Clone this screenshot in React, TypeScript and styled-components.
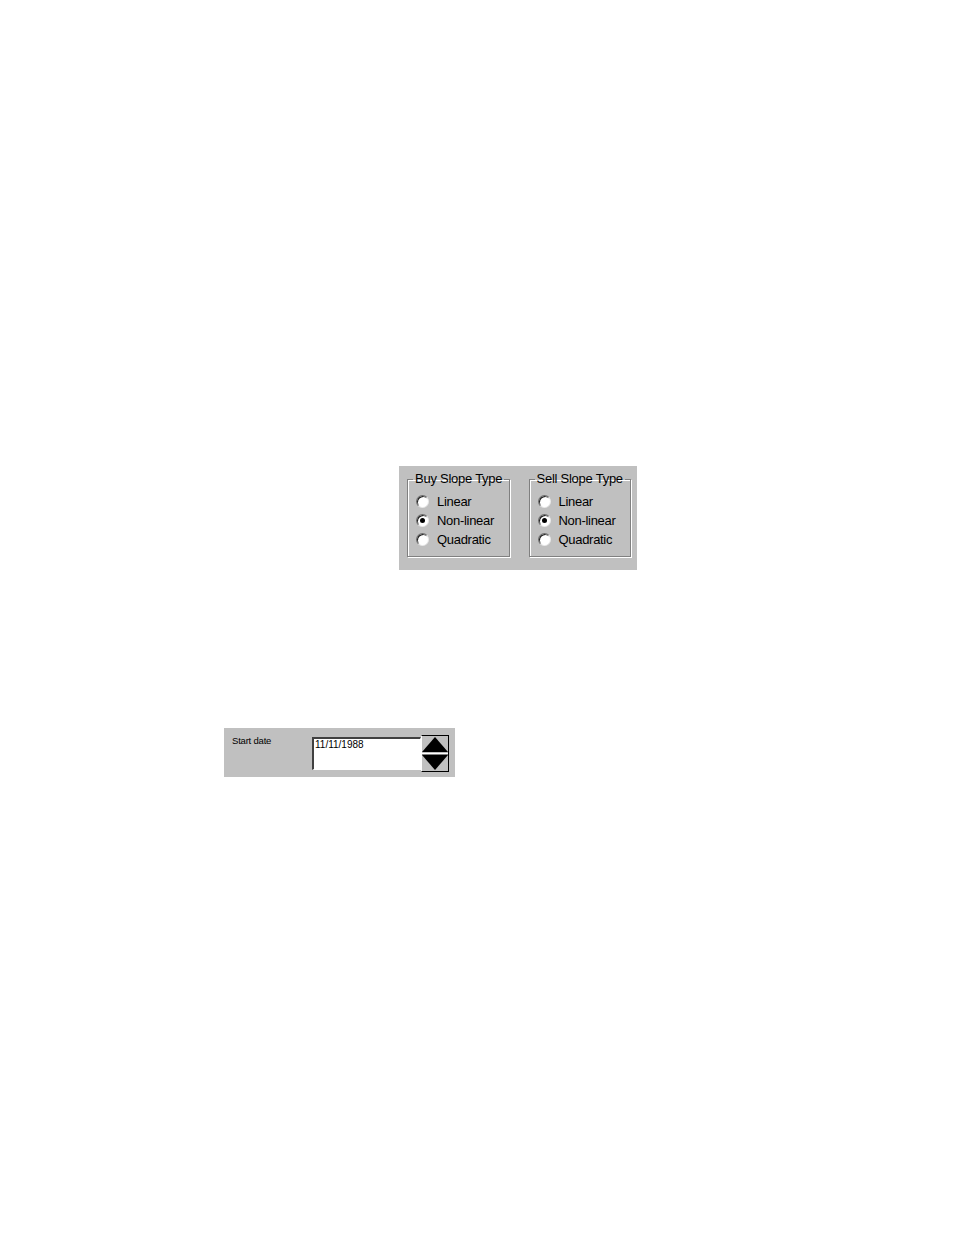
import React from 'react';
import styled, { createGlobalStyle } from 'styled-components';

const GlobalStyle = createGlobalStyle`
  html, body {
    margin: 0;
    padding: 0;
    background: #ffffff;
  }
  body {
    font-family: "Liberation Sans", Arial, sans-serif;
  }
`;

const Page = styled.div`
  width: 954px;
  min-height: 1235px;
  display: flex;
  flex-direction: column;
  align-items: flex-start;
  padding-top: 466px;
  box-sizing: border-box;
`;

const Dialog = styled.div<{ $left: number; $top?: number }>`
  margin-left: ${(p) => p.$left}px;
  margin-top: ${(p) => p.$top ?? 0}px;
  background: #c0c0c0;
  box-sizing: border-box;
`;

const SlopePanel = styled(Dialog)`
  width: 238px;
  height: 104px;
  display: flex;
  gap: 19px;
  padding: 5px 6px 0 8px;
`;

const Group = styled.fieldset`
  margin: 0;
  min-inline-size: 0;
  width: 103px;
  height: 86px;
  box-sizing: border-box;
  padding: 5px 0 0 8px;
  border: 1px solid #808080;
  box-shadow: 1px 1px 0 #ffffff, inset 1px 1px 0 #ffffff;
`;

const Legend = styled.legend`
  margin-left: -3px;
  padding: 0 2px;
  white-space: nowrap;
  font-size: 13px;
  letter-spacing: -0.25px;
  line-height: 16px;
  color: #000;
`;

const Option = styled.label`
  display: flex;
  align-items: center;
  height: 19px;
  gap: 8px;
  white-space: nowrap;
  font-size: 13px;
  letter-spacing: -0.3px;
  color: #000;
`;

const RadioDot = styled.span<{ $checked?: boolean }>`
  position: relative;
  width: 13px;
  height: 13px;
  border-radius: 50%;
  box-sizing: border-box;
  background: #ffffff;
  border: 1px solid;
  border-color: #6a6a6a #e8e8e8 #e8e8e8 #6a6a6a;
  box-shadow: inset 1px 1px 0 #202020;
  flex: none;

  &::after {
    content: '';
    display: ${(p) => (p.$checked ? 'block' : 'none')};
    position: absolute;
    left: 3px;
    top: 3px;
    width: 5px;
    height: 5px;
    border-radius: 50%;
    background: #000;
  }
`;

const DatePanel = styled(Dialog)`
  width: 231px;
  height: 49px;
  display: flex;
  align-items: flex-start;
  padding: 7px 6px 0 8px;
`;

const FieldLabel = styled.span`
  width: 80px;
  font-size: 9.5px;
  letter-spacing: -0.2px;
  color: #000;
`;

const DateInput = styled.div`
  width: 109px;
  height: 33px;
  margin-top: 2px;
  box-sizing: border-box;
  background: #fff;
  border-style: solid;
  border-width: 2px 1px 1px 2px;
  border-color: #404040 #ffffff #ffffff #404040;
  padding: 0 0 0 1px;
  font-size: 10px;
  line-height: 12px;
  color: #000;
`;

const Spinner = styled.div`
  width: 28px;
  height: 37px;
  box-sizing: border-box;
  border: 1px solid #000;
  border-left-color: #ffffff;
  background: #c0c0c0;
  display: flex;
  align-items: center;
  justify-content: center;
`;

const slopes = ['Buy Slope Type', 'Sell Slope Type'];
const options = ['Linear', 'Non-linear', 'Quadratic'];

export default function App() {
  return (
    <>
      <GlobalStyle />
      <Page>
        <SlopePanel $left={399}>
          {slopes.map((title) => (
            <Group key={title}>
              <Legend>{title}</Legend>
              {options.map((o) => (
                <Option key={o}>
                  <RadioDot $checked={o === 'Non-linear'} />
                  {o}
                </Option>
              ))}
            </Group>
          ))}
        </SlopePanel>
        <DatePanel $left={224} $top={158}>
          <FieldLabel>Start date</FieldLabel>
          <DateInput>11/11/1988</DateInput>
          <Spinner>
            <svg width="26" height="35" viewBox="0 0 26 35">
              <polygon points="13,1 26,16 0,16" fill="#000" />
              <line x1="0" y1="17.5" x2="26" y2="17.5" stroke="#fff" />
              <line x1="0" y1="18.5" x2="26" y2="18.5" stroke="#808080" />
              <polygon points="0,19 26,19 13,34" fill="#000" />
            </svg>
          </Spinner>
        </DatePanel>
      </Page>
    </>
  );
}
